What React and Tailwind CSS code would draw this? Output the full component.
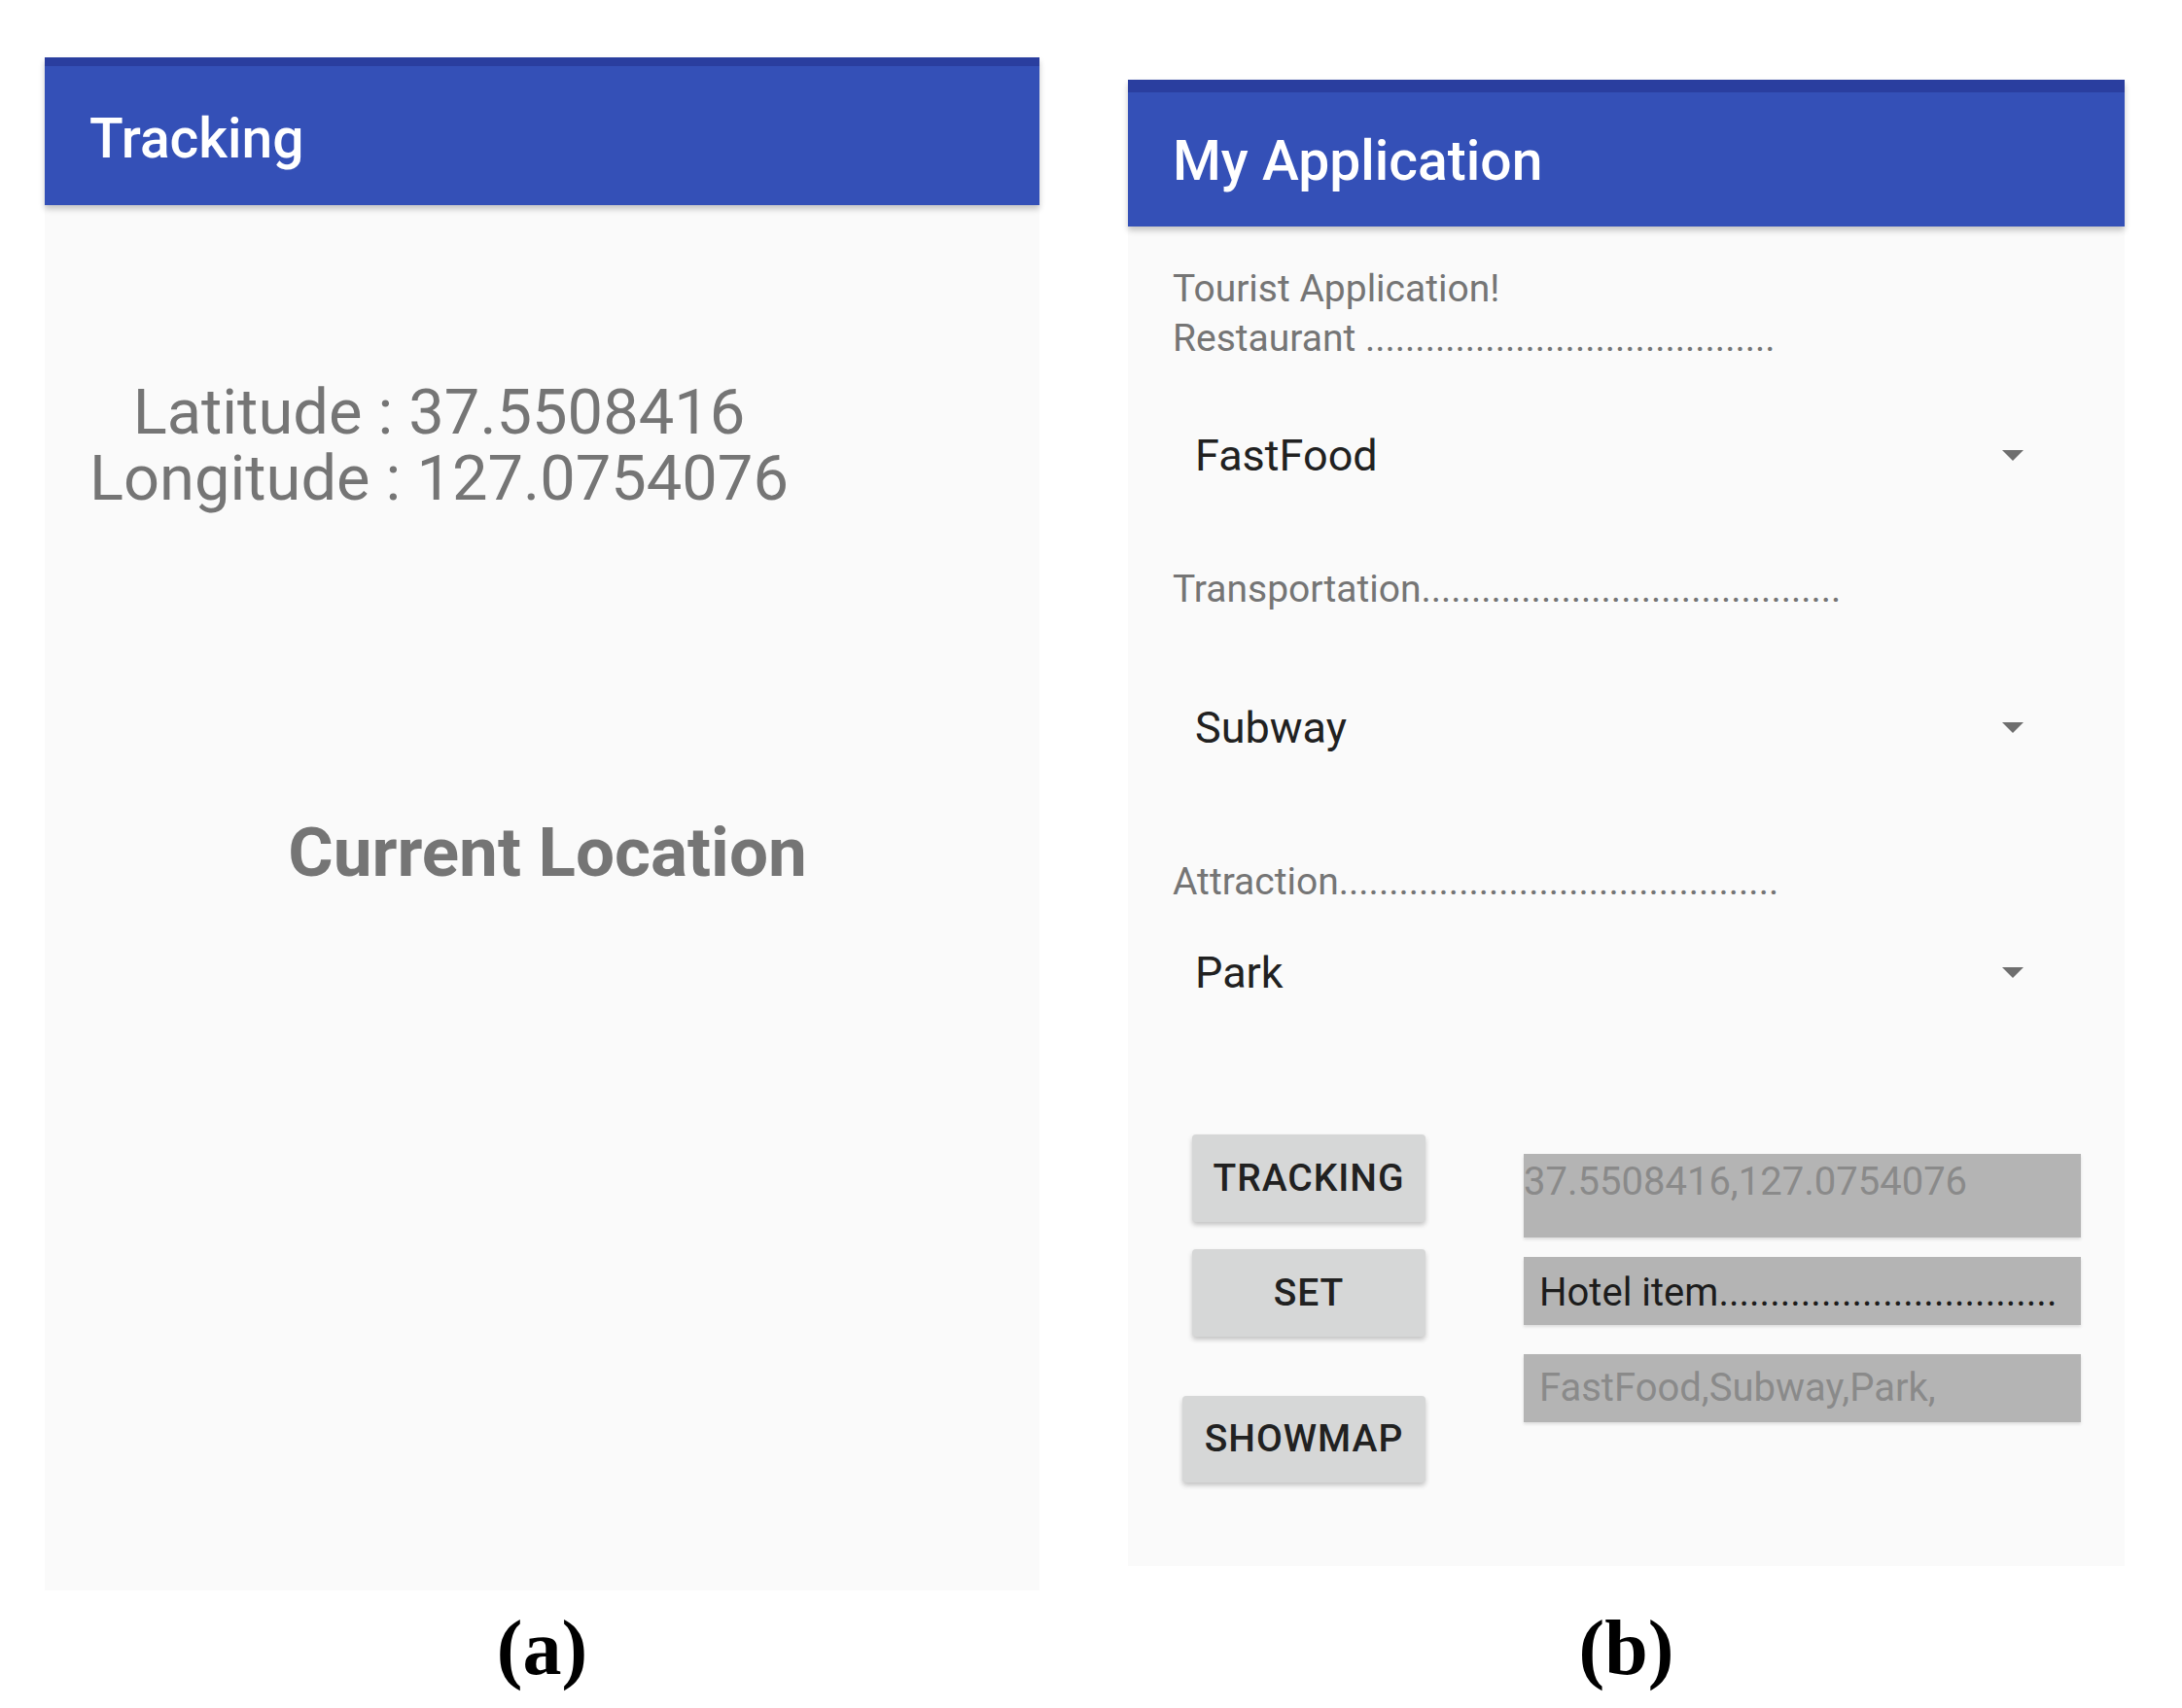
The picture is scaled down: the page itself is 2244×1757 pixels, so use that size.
import React from "react";

const dots = (n) => ".".repeat(n);

function Arrow() {
  return (
    <svg width="22" height="12" viewBox="0 0 22 12" className="shrink-0">
      <polygon points="0,0 22,0 11,11" fill="#6e6e6e" />
    </svg>
  );
}

function Spinner({ value, className }) {
  return (
    <div className={`flex h-[60px] items-center justify-between pl-[69px] pr-[104px] text-[45px] leading-[60px] text-[#212121] ${className}`}>
      <span>{value}</span>
      <Arrow />
    </div>
  );
}

function Btn({ children, className }) {
  return (
    <div className={`flex items-center justify-center rounded-[4px] bg-[#d6d7d7] text-[39px] font-medium uppercase tracking-[0.025em] text-[#212121] shadow-[0_3px_5px_rgba(0,0,0,0.22)] ${className}`}>
      {children}
    </div>
  );
}

export default function App() {
  return (
    <div className="flex h-[1757px] w-[2244px] overflow-hidden bg-white font-['Roboto',sans-serif]">
      {/* Panel (a) */}
      <div className="ml-[46px] mt-[59px] flex w-[1023px] flex-col">
        <div className="flex h-[1577px] flex-col bg-[#fafafa]">
          <div className="relative z-10 h-[152px] bg-[#3450b7] shadow-[0_4px_6px_rgba(0,0,0,0.22)]">
            <div className="h-[9px] bg-[#2a3e9f]" />
            <div className="pl-[46px] pt-[46px] text-[57px] font-medium leading-[57px] text-white">Tracking</div>
          </div>
          <div className="ml-[46px] mt-[179px] self-start text-center text-[65px] leading-[68px] text-[#757575]">
            <div>Latitude : 37.5508416</div>
            <div>Longitude : 127.0754076</div>
          </div>
          <div className="mt-[315px] pl-[11px] text-center text-[71px] font-bold leading-[71px] text-[#757575]">
            Current Location
          </div>
        </div>
        <div className="mt-[19px] text-center font-['Liberation_Serif',serif] text-[80px] font-bold leading-[80px] text-black">
          (a)
        </div>
      </div>

      {/* Panel (b) */}
      <div className="ml-[91px] mt-[82px] flex w-[1025px] flex-col">
        <div className="flex h-[1529px] flex-col bg-[#fafafa]">
          <div className="relative z-10 h-[151px] bg-[#3450b7] shadow-[0_4px_6px_rgba(0,0,0,0.22)]">
            <div className="h-[13px] bg-[#2a3e9f]" />
            <div className="pl-[46px] pt-[42px] text-[57px] font-medium leading-[57px] text-white">My Application</div>
          </div>

          <div className="mt-[39px] pl-[46px] text-[39px] leading-[51px] text-[#757575]">
            <div>Tourist Application!</div>
            <div className="whitespace-nowrap">Restaurant {dots(41)}</div>
          </div>
          <Spinner value="FastFood" className="mt-[65px]" />

          <div className="mt-[82px] whitespace-nowrap pl-[46px] text-[39px] leading-[51px] text-[#757575]">
            Transportation{dots(42)}
          </div>
          <Spinner value="Subway" className="mt-[87px]" />

          <div className="mt-[103px] whitespace-nowrap pl-[46px] text-[39px] leading-[51px] text-[#757575]">
            Attraction{dots(44)}
          </div>
          <Spinner value="Park" className="mt-[38px]" />

          <div className="mt-[136px] flex">
            <div className="flex w-[306px] flex-col items-end">
              <Btn className="h-[90px] w-[240px]">Tracking</Btn>
              <Btn className="mt-[28px] h-[90px] w-[240px]">Set</Btn>
              <Btn className="mt-[61px] h-[89px] w-[250px]">Showmap</Btn>
            </div>
            <div className="ml-[101px] flex w-[573px] flex-col text-[40px]">
              <div className="mt-[20px] h-[86px] bg-[#b4b4b4] pt-[9px] leading-[40px] text-[#8a8a8a] shadow-[0_2px_3px_rgba(0,0,0,0.12)]">
                37.5508416,127.0754076
              </div>
              <div className="mt-[20px] flex h-[70px] items-center whitespace-nowrap bg-[#b4b4b4] pl-[16px] pt-[3px] leading-[40px] text-[#1c1c1c] shadow-[0_2px_3px_rgba(0,0,0,0.12)]">
                Hotel item{dots(33)}
              </div>
              <div className="mt-[30px] flex h-[70px] items-center bg-[#b4b4b4] pl-[16px] leading-[40px] text-[#8a8a8a] shadow-[0_2px_3px_rgba(0,0,0,0.12)]">
                FastFood,Subway,Park,
              </div>
            </div>
          </div>
        </div>
        <div className="mt-[44px] text-center font-['Liberation_Serif',serif] text-[80px] font-bold leading-[80px] text-black">
          (b)
        </div>
      </div>
    </div>
  );
}
